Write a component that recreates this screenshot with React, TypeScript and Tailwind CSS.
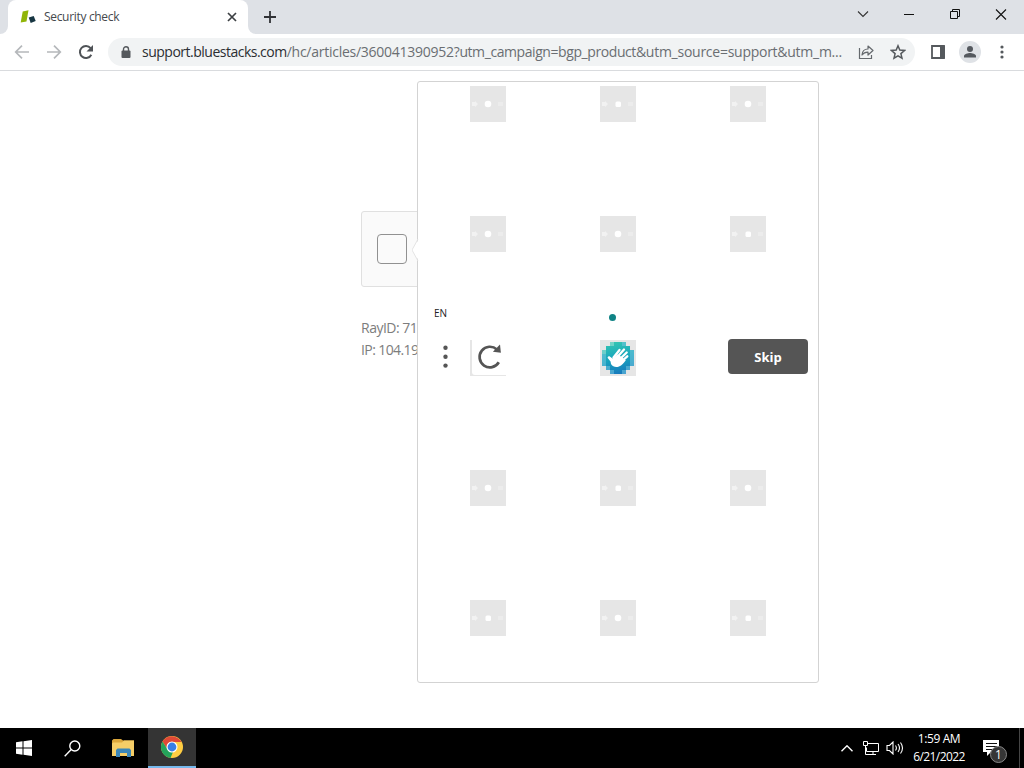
import { ReactNode } from 'react';

const tileRows = {
  top: [[0, 1, 0], [0, 0, 1]],
  bottom: [[0, 1, 0], [1, 0, 1]],
};

function TabStrip() {
  return (
    <div className="flex h-[34px] shrink-0 bg-[#dee1e6]">
      <div className="w-2 bg-white">
        <div className="h-full rounded-br-lg bg-[#dee1e6]" />
      </div>
      <div className="flex w-[240px] items-center rounded-t-lg bg-white pl-3 pr-[11px]">
        <svg className="mr-2 h-4 w-4" viewBox="0 0 16 16">
          <path d="M2.700 2.500 8.500 1.200 6.500 12.500.7 13.600z" fill="#91b508" />
          <path d="m8.700 8.500 5-1.500 2 5-5 2z" fill="#173642" />
        </svg>
        <span className="flex-1 text-[12px] leading-4 tracking-[-0.32px] text-[#45494d]">Security check</span>
        <svg className="h-[10px] w-[10px]" viewBox="0 0 10 10" stroke="#3c4043" strokeWidth="1.7">
          <path d="m1 1 8 8M9 1 1 9" />
        </svg>
      </div>
      <div className="w-2 bg-white">
        <div className="h-full rounded-bl-lg bg-[#dee1e6]" />
      </div>
      <svg className="ml-2 mt-[11px] h-3 w-3" viewBox="0 0 12 12" stroke="#303236" strokeWidth="1.8">
        <path d="M6 0v12M0 6h12" />
      </svg>
      <div className="ml-auto flex items-start">
        <svg className="h-7 w-[46px]" viewBox="0 0 46 28" fill="none" stroke="#333" strokeWidth="1.1">
          <path d="m18 11.500 5 5 5-5" />
        </svg>
        <svg className="h-7 w-[46px]" viewBox="0 0 46 28" stroke="#111">
          <path d="M18 14.500h10" />
        </svg>
        <svg className="h-7 w-[46px]" viewBox="0 0 46 28" fill="none" stroke="#111">
          <path d="M18.500 11.500h7v7h-7zM20.500 11.500v-2h7v7h-2" />
        </svg>
        <svg className="h-7 w-[46px]" viewBox="0 0 46 28" stroke="#111" strokeWidth="1.1">
          <path d="m18 9.500 10 10M28 9.500l-10 10" />
        </svg>
      </div>
    </div>
  );
}

function Toolbar() {
  return (
    <div className="flex h-[37px] shrink-0 items-center border-b border-[#d9dbde] bg-white pl-[14px]">
      <svg className="h-4 w-4" viewBox="0 0 16 16" fill="none" stroke="#b5b8bb" strokeWidth="1.7">
        <path d="M15 8H2M8 1.700 1.700 8 8 14.300" />
      </svg>
      <svg className="ml-4 h-4 w-4" viewBox="0 0 16 16" fill="none" stroke="#b5b8bb" strokeWidth="1.7">
        <path d="M1 8h13M8 1.700 14.300 8 8 14.300" />
      </svg>
      <svg className="ml-4 h-4 w-4" viewBox="0 0 16 16">
        <path d="M13.300 10.700A6 6 0 1 1 12.600 4.200" fill="none" stroke="#4f5357" strokeWidth="2" />
        <path d="M15 1v6.500H8.500z" fill="#4f5357" />
      </svg>
      <div className="ml-[14px] flex h-7 w-[807px] items-center rounded-full bg-[#f1f3f4] pl-[13px]">
        <svg className="mt-[-1px] h-3 w-[10px]" viewBox="0 0 10 12">
          <path d="M2.500 5V3.200a2.500 2.500 0 0 1 5 0V5" fill="none" stroke="#55595d" strokeWidth="1.4" />
          <rect x="0.500" y="4.500" width="9" height="7.500" rx="1" fill="#55595d" />
        </svg>
        <span className="ml-[11px] w-[702px] whitespace-nowrap text-[14px] leading-5 text-[#6a6e72]">
          <span className="tracking-[-0.5px] text-[#2b2e32]">support.bluestacks.com</span>
          <span className="tracking-[-0.26px]">/hc/articles/360041390952</span>
          <span className="tracking-[-0.42px]">?utm_campaign=bgp_product</span>
          <span className="tracking-[-0.26px]">&amp;utm_source=support&amp;utm_m...</span>
        </span>
        <svg className="ml-[14px] h-4 w-4" viewBox="0 0 16 16" fill="none" stroke="#65696d" strokeWidth="1.2">
          <path d="M1.500 4v10.500h12V11" />
          <path d="M4 11c.3-4 2.500-6 6-6V2l5 4.500-5 4.500V8.200C7.500 8.100 5.500 9 4 11z" strokeLinejoin="round" />
        </svg>
        <svg className="ml-4 h-4 w-4" viewBox="0 0 16 16" fill="none" stroke="#55595d" strokeWidth="1.5">
          <path d="m8 1.800 1.800 4.300 4.700.4-3.600 3.100 1.100 4.600L8 11.800l-4 2.400 1.100-4.600-3.600-3.100 4.700-.4z" />
        </svg>
      </div>
      <svg className="ml-4 h-[14px] w-[14px]" viewBox="0 0 14 14">
        <path d="M1 1h12v12H1z" fill="none" stroke="#55595d" strokeWidth="1.8" />
        <path d="M9 1h5v12H9z" fill="#55595d" />
      </svg>
      <svg className="ml-[14px] h-[22px] w-[22px]" viewBox="0 0 22 22">
        <circle cx="11" cy="11" r="11" fill="#dfe2e6" />
        <circle cx="11" cy="8" r="3" fill="#55595f" />
        <path d="M5 16.500V15c0-2 4-3 6-3s6 1 6 3v1.500z" fill="#55595f" />
      </svg>
      <svg className="ml-[19px] h-[14px] w-1" viewBox="0 0 4 14" fill="#55595d">
        <circle cx="2" cy="2" r="1.600" />
        <circle cx="2" cy="7" r="1.600" />
        <circle cx="2" cy="12" r="1.600" />
      </svg>
    </div>
  );
}

function Tile({ square }: { square: boolean }) {
  return (
    <svg className="h-9 w-9" viewBox="0 0 36 36">
      <path d="M0 0h36v36H0z" fill="#e6e6e6" />
      <path d="M2 16h3v-1l3 3-3 3v-1H2z" fill="#f2f2f2" />
      {square ? <rect x="15.500" y="15.500" width="5.500" height="5.500" rx="1.500" fill="#fff" /> : <circle cx="18" cy="18" r="3.300" fill="#fff" />}
      <path d="M28 16h5v4h-5z" fill="#ececec" />
    </svg>
  );
}

function TileRows({ rows }: { rows: number[][] }) {
  return (
    <div className="flex flex-col gap-[94px] pl-[52px]">
      {rows.map((row, i) => (
        <div key={i} className="flex gap-[94px]">
          {row.map((v, j) => <Tile key={j} square={v === 1} />)}
        </div>
      ))}
    </div>
  );
}

function HandLogo() {
  return (
    <svg className="h-9 w-9" viewBox="0 0 36 36">
      <defs>
        <linearGradient id="sea" x1="0.300" y1="0" x2="0.500" y2="1">
          <stop offset="0" stopColor="#35c5b2" />
          <stop offset="0.500" stopColor="#18a7bd" />
          <stop offset="1" stopColor="#187bbd" />
        </linearGradient>
      </defs>
      <path d="M0 0h36v36H0z" fill="#e6e6e6" />
      <path d="M10 2h16v4h4v4h4v16h-4v4h-4v4H10v-4H6v-4H2V10h4V6h4z" fill="url(#sea)" />
      <path d="M10 2h4v4h-4zM2 10h4v4H2z" fill="#9ce0d6" opacity="0.600" />
      <path d="M22 2h4v4h-4zM30 10h4v16h-4zM2 14h4v12H2zM6 26h4v4H6zM26 26h4v4h-4zM10 30h4v4h-4zM22 30h4v4h-4z" fill="#75c5df" opacity="0.550" />
      <path d="M9.500 16.200c-1.500-.4-2.300.9-1.600 2.100l2.800 3.500c-.2 4.200 4.200 6.200 8.300 4.600 3-1.100 4.700-3.400 6.800-6.200l-8-6-5.300 4.300z" fill="#fff" />
      <path d="m13.500 17.500 6-7.500M16.500 18l7.500-8.500M19 20l7.700-7.500M21.500 21.500l5.800-5.200" stroke="#fff" strokeWidth="2.300" strokeLinecap="round" />
    </svg>
  );
}

function Challenge() {
  return (
    <div className="absolute left-[417px] top-[10px] h-[602px] w-[402px] rounded-[3px] border border-[#d3d3d3] bg-white pt-1">
      <div className="absolute left-[-6px] top-[157px] h-[22px] w-[6px]">
        <svg className="h-[22px] w-[7px]" viewBox="0 0 7 22">
          <path d="M7 0v22L0 11z" fill="#fff" />
          <path d="M6 0 0 11l6 11" fill="none" stroke="#e4e4e4" />
        </svg>
      </div>
      <TileRows rows={tileRows.top} />
      <div className="h-[218px] pt-[54px]">
        <div className="flex h-[14px] items-center pl-4">
          <span className="w-[175px] text-[10px] leading-[14px] text-[#222]">EN</span>
          <span className="mt-[9px] h-[7px] w-[7px] rounded-full bg-[#0f8385]" />
        </div>
        <div className="mt-5 flex h-9 items-start">
          <svg className="ml-6 mt-[5px] h-[24px] w-[7px]" viewBox="0 0 7 24" fill="#555">
            <circle cx="3.500" cy="2.800" r="2.200" />
            <circle cx="3.500" cy="11.700" r="2.200" />
            <circle cx="3.500" cy="20.600" r="2.200" />
          </svg>
          <div className="ml-[21px] h-9 w-9 bg-[#e6e6e6] pb-px pl-[2px]">
            <svg className="h-[35px] w-[34px] rounded-bl-[3px] bg-white" viewBox="0 0 34 35">
              <path d="M26.800 22.200A10.300 10.300 0 1 1 24.900 9.500" fill="none" stroke="#555" strokeWidth="2.700" />
              <path d="m28 4.500.9 8.200-8-1z" fill="#555" />
            </svg>
          </div>
          <div className="ml-[94px]"><HandLogo /></div>
          <button className="ml-[92px] mt-[-1px] h-[35px] w-20 rounded-[4px] bg-[#555] pt-px text-[13px] font-bold leading-[35px] text-white">Skip</button>
        </div>
      </div>
      <TileRows rows={tileRows.bottom} />
    </div>
  );
}

function TaskItem({ active, children }: { active?: boolean; children: ReactNode }) {
  return (
    <div className={active ? 'flex h-10 w-12 items-center justify-center border-b-2 border-[#76b9ed] bg-[#343434]' : 'flex h-10 w-12 items-center justify-center'}>
      {children}
    </div>
  );
}

function Taskbar() {
  return (
    <div className="flex h-10 shrink-0 items-center bg-black text-white">
      <TaskItem>
        <svg className="h-4 w-4" viewBox="0 0 16 16" fill="#fff">
          <path d="M0 2.200 6.500 1.300v6.200H0zM7.500 1.200 16 0v7.500H7.500zM0 8.500h6.500v6.200L0 13.800zM7.500 8.500H16V16l-8.500-1.200z" />
        </svg>
      </TaskItem>
      <TaskItem>
        <svg className="h-[17px] w-[17px]" viewBox="0 0 17 17" fill="none" stroke="#fff" strokeWidth="1.400">
          <circle cx="10.800" cy="6" r="5" />
          <path d="M7.200 9.600.7 16.200" />
        </svg>
      </TaskItem>
      <TaskItem>
        <svg className="ml-[5px] h-[18px] w-[22px]" viewBox="0 0 22 18">
          <path d="M0 1.500 1.500 0H9l2 1.500h11V17H0z" fill="#dba63b" />
          <path d="M1 3.500 10 3.500 12 1.500h10V17H0V4.500z" fill="#f5cd67" />
          <path d="M4 18v-7l1.500-1.500h12L19 11v7h-4v-4H8v4z" fill="#3b86b8" />
        </svg>
      </TaskItem>
      <div className="ml-1">
        <TaskItem active>
          <svg className="h-[22px] w-[22px]" viewBox="0 0 22 22">
            <circle cx="11" cy="11" r="11" fill="#ffcd42" />
            <path d="M1.500 5.500a11 11 0 0 1 19 .5H11a5 5 0 0 0-4.400 7.500z" fill="#df4937" />
            <path d="M1.500 5.500 6.600 13.500A5 5 0 0 0 12 16L9.500 22A11 11 0 0 1 1.500 5.500z" fill="#24a35b" />
            <circle cx="11" cy="11" r="5.500" fill="#fff" />
            <circle cx="11" cy="11" r="4.400" fill="#397ee7" />
          </svg>
        </TaskItem>
      </div>
      <div className="ml-auto flex h-10 items-center">
        <svg className="h-[7px] w-3" viewBox="0 0 12 7" fill="none" stroke="#fff" strokeWidth="1.400">
          <path d="m.5 6.300 5.500-5.500 5.500 5.500" />
        </svg>
        <svg className="ml-[9px] h-4 w-[18px]" viewBox="0 0 18 16" fill="none" stroke="#fff">
          <path d="M6 3.500h10.500v8H4.500v-4M11 11.500v3M7 14.500h7M1.500 1.500h4v4h-4zM3.500 5.500v9H7" />
        </svg>
        <svg className="ml-[6px] h-[14px] w-[18px]" viewBox="0 0 18 14" fill="none" stroke="#fff" strokeWidth="1.100">
          <path d="M1 4.500h2.500L7 1v12L3.500 9.500H1zM9.500 4.500q1.800 2.500 0 5M12 3q3 4 0 8M14.500 1.500q4 5.500 0 11" />
        </svg>
        <div className="ml-[7px] mr-px flex w-14 flex-col items-center whitespace-nowrap text-[12px] leading-[18px]">
          <span className="tracking-[-0.4px]">1:59 AM</span>
          <span className="tracking-[-0.6px]">6/21/2022</span>
        </div>
        <svg className="ml-[15px] mr-px mt-1 h-[26px] w-[26px]" viewBox="0 0 26 26">
          <path d="M0 3h16v12H8l-4 4v-4H0z" fill="#fff" />
          <path d="M3 6.500h11M3 9.500h11M3 12.500h7" stroke="#111" />
          <circle cx="15.500" cy="17.500" r="8" fill="#363636" stroke="#888" />
          <text x="15.500" y="22" textAnchor="middle" fontSize="12" fill="#fff">1</text>
        </svg>
        <div className="ml-[9px] mr-1 h-10 w-px bg-[#454545]" />
      </div>
    </div>
  );
}

export default function App() {
  return (
    <div className="flex h-[768px] w-[1024px] flex-col overflow-hidden bg-white font-['Open_Sans','Noto_Sans',sans-serif]">
      <TabStrip />
      <Toolbar />
      <main className="relative flex-1 pl-[361px] pt-[140px]">
        <div className="flex h-[76px] w-[300px] items-center rounded-[3px] border border-[#e0e0e0] bg-[#fafafa] pl-[15px]">
          <div className="h-[30px] w-[30px] rounded-[4px] border border-[#919191] bg-[#fafafa]" />
        </div>
        <div className="mt-[30px] whitespace-nowrap text-[14px] leading-[22px] text-[#7d7d7d]">
          <p className="tracking-[-0.5px]">RayID: 71</p>
          <p className="tracking-[-0.6px]">IP: 104.19</p>
        </div>
        <Challenge />
      </main>
      <Taskbar />
    </div>
  );
}
